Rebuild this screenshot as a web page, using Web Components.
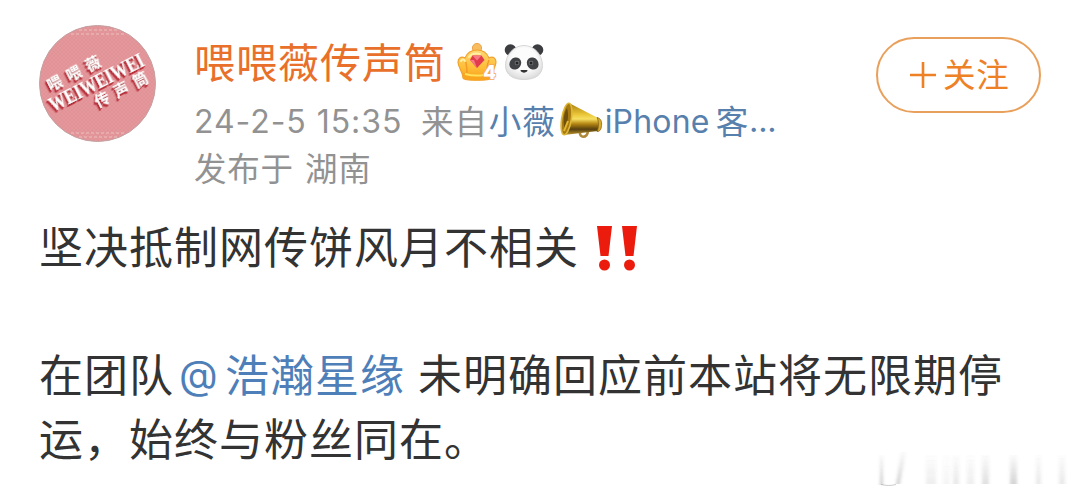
<!DOCTYPE html>
<html lang="zh-CN">
<head>
<meta charset="UTF-8">
<title>微博正文</title>
<style>
  body {
    margin: 0;
    background: #fff;
    overflow: hidden;
    font-family: Inter, "Noto Sans CJK SC", sans-serif;
  }
</style>
</head>
<body>
<weibo-post>
  <user-avatar slot="avatar"></user-avatar>
  <user-info slot="info" name="喂喂薇传声筒" time="24-2-5 15:35" place="湖南"></user-info>
  <follow-button slot="action">关注</follow-button>
  <post-line>坚决抵制网传饼风月不相关<double-bang></double-bang></post-line>
  <post-line></post-line>
  <post-line>在团队<user-mention name="浩瀚星缘"></user-mention>未明确回应前本站将无限期停</post-line>
  <post-line>运，始终与粉丝同在。</post-line>
</weibo-post>

<script>
(function() {

  class BaseElement extends HTMLElement {
    constructor() {
      super();
      this.attachShadow({ mode: 'open' });
    }

    connectedCallback() {
      this.shadowRoot.innerHTML = this.template();
    }
  }

  class WeiboPost extends BaseElement {
    template() {
      return `
        <style>
          :host {
            display: flex;
            flex-direction: column;
            box-sizing: border-box;
            width: 1080px;
            height: 497px;
            padding: 25px 39px 0;
            position: relative;
          }

          header {
            display: flex;
            align-items: flex-start;
            height: 188px;
          }

          .info {
            flex: 1;
            margin-left: 38px;
          }

          .action {
            margin-top: 12px;
          }

          corner-mark {
            position: absolute;
            right: 0;
            bottom: 0;
          }
        </style>
        <header>
          <slot name="avatar"></slot>
          <div class="info"><slot name="info"></slot></div>
          <div class="action"><slot name="action"></slot></div>
        </header>
        <main><slot></slot></main>
        <corner-mark></corner-mark>
      `;
    }
  }

  class UserAvatar extends BaseElement {
    template() {
      return `
        <style>
          :host { display: block; width: 117px; height: 117px; }
          svg { display: block; overflow: visible; }
          .cjk { font: 700 15px "Noto Sans CJK SC", sans-serif; }
          .latin { font: 700 21px "Liberation Serif", serif; }
        </style>
        <svg width="117" height="117" viewBox="0 0 117 117">
          <defs>
            <pattern id="dots" width="4" height="4" patternUnits="userSpaceOnUse">
              <rect width="4" height="4" fill="#e5989b"/>
              <path d="M0 0h2v2H0zM2 2h2v2H2z" fill="#e09297"/>
            </pattern>
            <filter id="drop" x="-10%" y="-30%" width="120%" height="160%">
              <feDropShadow dx="-1.2" dy="1" stdDeviation="0.2" flood-color="#b8323c"/>
              <feDropShadow dx="-1.2" dy="1" stdDeviation="0.2" flood-color="#b8323c"/>
            </filter>
          </defs>
          <circle cx="58.5" cy="58.5" r="58" fill="url(#dots)" stroke="#c4a0a0" stroke-width="1"/>
          <path d="M40 5h38M32 9h53M40 112h38M32 108h53" stroke="#e9b3b2" stroke-width="1.5" stroke-dasharray="3 2"/>
          <g fill="#fff" transform="rotate(-27 58.5 58.5)" filter="url(#drop)">
            <text class="cjk" x="13" y="44" textLength="58">喂喂薇</text>
            <text class="latin" x="6" y="64" textLength="104" lengthAdjust="spacingAndGlyphs">WEIWEIWEI</text>
            <text class="cjk" x="48" y="80" textLength="58">传声筒</text>
          </g>
        </svg>
      `;
    }
  }

  class UserInfo extends BaseElement {
    template() {
      return `
        <style>
          :host { display: block; color: #929292; white-space: nowrap; }
          .row { display: flex; align-items: center; }
          .name {
            height: 76px;
            margin-top: -3px;
            color: #e8702a;
            font-size: 41px;
            letter-spacing: 1px;
          }
          .meta {
            height: 48px;
            font-size: 32.5px;
            margin-top: -3px;
            letter-spacing: 0.9px;
          }
          .place {
            height: 46px;
            font-size: 32.5px;
            letter-spacing: 0.8px;
          }
          .time { font-size: 32px; letter-spacing: 0.95px; width: 227px; position: relative; top: 2px; }
          .source { color: #5780ad; display: flex; align-items: center; margin-left: 1px; }
          .latin { font-size: 32px; letter-spacing: 0.2px; margin: 0 6px 0 2px; position: relative; top: 2px; }
          .dots { font-family: Inter, sans-serif; letter-spacing: -0.3px; position: relative; top: 1px; }
          crown-badge { margin: 3px 0 0 11px; }
          panda-face { margin: 3px 0 0 7px; }
          mega-phone { margin: 4px 0 0 4px; }
          .city { margin-left: 11px; }
        </style>
        <div class="row name"><span>${this.getAttribute('name')}</span><crown-badge></crown-badge><panda-face></panda-face></div>
        <div class="row meta">
          <span class="time">${this.getAttribute('time')}</span>
          <span>来自</span>
          <span class="source"><span>小薇</span><mega-phone></mega-phone><span class="latin">iPhone</span><span>客</span><span class="dots">...</span></span>
        </div>
        <div class="row place"><span>发布于</span><span class="city">${this.getAttribute('place')}</span></div>
      `;
    }
  }

  class CrownBadge extends BaseElement {
    template() {
      return `
        <style>
          :host { display: block; width: 40px; height: 40px; letter-spacing: 0; }
          svg { display: block; overflow: visible; }
        </style>
        <svg width="40" height="40" viewBox="0 0 40 40">
          <defs>
            <linearGradient id="gold" x1="0" y1="0" x2="0" y2="1">
              <stop offset="0" stop-color="#ffd873"/>
              <stop offset="0.6" stop-color="#ffbd35"/>
              <stop offset="1" stop-color="#f79c1c"/>
            </linearGradient>
          </defs>
          <circle cx="20" cy="6" r="4.6" fill="#f8bd5e" stroke="#eda34a"/>
          <path d="M6 36c0-7-5-10-5-16 0-4 3-6 7-4 2-5 6-8 12-8s10 3 12 8c4-2 7 0 7 4 0 6-5 9-5 16-1 3-27 3-28 0z" fill="url(#gold)" stroke="#f0a22f" stroke-width="1.2"/>
          <path d="M8 18c2 5 2 9 2 13M32 18c-2 4-2 7-2 9" stroke="#f39a28" stroke-width="1.5" fill="none"/>
          <path d="M4 19c1-2 3-2 4 0M12 15c3-4 7-4 11-3" stroke="#fff0a6" stroke-width="2" fill="none" stroke-linecap="round"/>
          <path d="M6 31c8 2 20 2 28 0v5c-3 3-25 3-28 0z" fill="#f9a51d"/>
          <path d="M8 32c7 2 13 2 19 1" stroke="#ffe25c" stroke-width="2" fill="none"/>
          <path d="M15.500 13.500h9l3 4.500-7.500 8-7-8z" fill="#e23c4c"/>
          <path d="M15.500 13.500l4.500 5 4.500-5zM13 18h4l3 8z" fill="#f57a83"/>
          <text x="26" y="37" font-family="Inter, sans-serif" font-weight="800" font-size="19" fill="#fff" stroke="#f4a65a" stroke-width="1.500" paint-order="stroke">4</text>
        </svg>
      `;
    }
  }

  class PandaFace extends BaseElement {
    template() {
      return `
        <style>
          :host { display: block; width: 40px; height: 38px; }
          svg { display: block; }
        </style>
        <svg width="40" height="38" viewBox="0 0 40 38">
          <defs>
            <radialGradient id="face" cx="0.5" cy="0.4" r="0.65">
              <stop offset="0.5" stop-color="#fcfcfc"/>
              <stop offset="1" stop-color="#d6d6d6"/>
            </radialGradient>
          </defs>
          <circle cx="6.500" cy="7" r="5.800" fill="#3c3d40"/>
          <circle cx="33.500" cy="7" r="5.800" fill="#3c3d40"/>
          <path d="M20 2.500c10 0 18.500 9 18.500 20 0 9-7 14-18.500 14s-18.500-5-18.500-14c0-11 8.500-20 18.500-20z" fill="url(#face)" stroke="#cfcfcf" stroke-width="0.800"/>
          <ellipse cx="11.300" cy="20.500" rx="5.600" ry="6.400" transform="rotate(38 11.300 20.500)" fill="#414246"/>
          <ellipse cx="28.700" cy="20.500" rx="5.600" ry="6.400" transform="rotate(-38 28.700 20.500)" fill="#414246"/>
          <circle cx="13" cy="20" r="2.300" fill="#75787b"/>
          <circle cx="27" cy="20" r="2.300" fill="#75787b"/>
          <circle cx="13" cy="20" r="1.500" fill="#222"/>
          <circle cx="27" cy="20" r="1.500" fill="#222"/>
          <path d="M17 27h6c.8 0 .5 1 0 1.600-1.500 1.400-4.500 1.400-6 0-.5-.6-.8-1.600 0-1.600z" fill="#333"/>
        </svg>
      `;
    }
  }

  class MegaPhone extends BaseElement {
    template() {
      return `
        <style>
          :host { display: block; width: 43px; height: 38px; }
          svg { display: block; }
        </style>
        <svg width="43" height="38" viewBox="0 0 43 38">
          <defs>
            <linearGradient id="horn" x1="0" y1="0" x2="0" y2="1">
              <stop offset="0" stop-color="#a77c12"/>
              <stop offset="0.35" stop-color="#e9c536"/>
              <stop offset="0.5" stop-color="#f6df62"/>
              <stop offset="0.65" stop-color="#b58613"/>
              <stop offset="0.82" stop-color="#56400f"/>
              <stop offset="1" stop-color="#c29a2f"/>
            </linearGradient>
          </defs>
          <path d="M20 30c-1 6 7 7 8-1" fill="none" stroke="#b0893a" stroke-width="2.600"/>
          <path d="M9 1l29 15c2 4 2 9 0 13L4 33z" fill="url(#horn)"/>
          <ellipse cx="6.500" cy="17" rx="4.800" ry="16" transform="rotate(9 6.500 17)" fill="#a87a12" stroke="#ddb838" stroke-width="1.600"/>
          <path d="M7 6c2 6 1 15-2 22-2-6-2-16 2-22z" fill="#70500d"/>
          <path d="M8 19l-4 10" stroke="#e4b72d" stroke-width="2"/>
          <path d="M37 15.500c4 1 5 4 4.500 8-.3 4-1.500 6-4.500 6 2-4 2-10 0-14z" fill="#d8ab27" stroke="#86651a" stroke-width="0.800"/>
        </svg>
      `;
    }
  }

  class FollowButton extends BaseElement {
    template() {
      return `
        <style>
          :host { display: block; }
          button {
            display: flex;
            align-items: center;
            box-sizing: border-box;
            width: 165px;
            height: 76px;
            padding: 0 0 0 31px;
            border: 2px solid #e9a05c;
            border-radius: 38px;
            background: #fff;
            color: #ee8126;
            font: 32.5px "Noto Sans CJK SC", sans-serif;
            letter-spacing: 0.8px;
          }
          svg { margin-right: 6px; }
          slot { display: block; margin-top: -5px; }
        </style>
        <button>
          <svg width="28" height="28" viewBox="0 0 28 28"><path d="M14 1v26M1 14h26" stroke="#ee8126" stroke-width="2.600"/></svg>
          <slot></slot>
        </button>
      `;
    }
  }

  class PostLine extends BaseElement {
    template() {
      return `
        <style>
          :host {
            display: flex;
            align-items: center;
            height: 64px;
            color: #333;
            font-family: "Noto Sans CJK SC", sans-serif;
            font-size: 44px;
            letter-spacing: 1px;
            white-space: nowrap;
          }
        </style>
        <slot></slot>
      `;
    }
  }

  class UserMention extends BaseElement {
    template() {
      return `
        <style>
          :host { display: flex; align-items: center; color: #4f7fb9; margin: 0 13px 0 5px; }
          .at { font-family: Inter, sans-serif; font-size: 40px; width: 46px; position: relative; top: 1px; }
        </style>
        <span class="at">@</span><span>${this.getAttribute('name')}</span>
      `;
    }
  }

  class DoubleBang extends BaseElement {
    template() {
      return `
        <style>
          :host { display: block; margin: 6px 0 0 18px; }
          svg { display: block; }
        </style>
        <svg width="42" height="46" viewBox="0 0 42 46" fill="#eb1c0e">
          <path d="M0 1h15l-3.500 30h-8zM25 1h15l-3.500 30h-8z"/>
          <circle cx="7.500" cy="40" r="5.500"/>
          <circle cx="32.500" cy="40" r="5.500"/>
        </svg>
      `;
    }
  }

  // faded strokes in the bottom right corner
  class CornerMark extends BaseElement {
    template() {
      const bars = [
        [66, 10, 0.07], [83, 7, 0.04], [93, 6, 0.09], [107, 7, 0.07],
        [122, 7, 0.13], [150, 7, 0.18], [176, 5, 0.09], [199, 6, 0.09]
      ];
      return `
        <style>
          :host { display: block; width: 220px; height: 67px; }
          svg { display: block; }
        </style>
        <svg width="220" height="67" viewBox="0 0 220 67">
          <defs>
            <linearGradient id="fade" x1="0" y1="0" x2="0" y2="1">
              <stop offset="0" stop-color="#555" stop-opacity="0.1"/>
              <stop offset="1" stop-color="#555"/>
            </linearGradient>
            <filter id="soft"><feGaussianBlur stdDeviation="1.600 0.500"/></filter>
          </defs>
          <g filter="url(#soft)">
            ${bars.map(b => `<rect x="${b[0]}" y="25" width="${b[1]}" height="29" fill="url(#fade)" opacity="${b[2] * 1.4}"/>`).join('')}
            <path d="M20 25h3v30h-3z" fill="url(#fade)" opacity="0.3"/>
            <path d="M41 22h5l-6 32h-4z" fill="url(#fade)" opacity="0.25"/>
          </g>
          <path d="M21 54.500c5 1.300 10 1.300 15 0" fill="none" stroke="#999" opacity="0.5"/>
        </svg>
      `;
    }
  }

  customElements.define('crown-badge', CrownBadge);
  customElements.define('panda-face', PandaFace);
  customElements.define('mega-phone', MegaPhone);
  customElements.define('double-bang', DoubleBang);
  customElements.define('corner-mark', CornerMark);
  customElements.define('user-avatar', UserAvatar);
  customElements.define('user-info', UserInfo);
  customElements.define('follow-button', FollowButton);
  customElements.define('user-mention', UserMention);
  customElements.define('post-line', PostLine);
  customElements.define('weibo-post', WeiboPost);
})();
</script>
</body>
</html>
